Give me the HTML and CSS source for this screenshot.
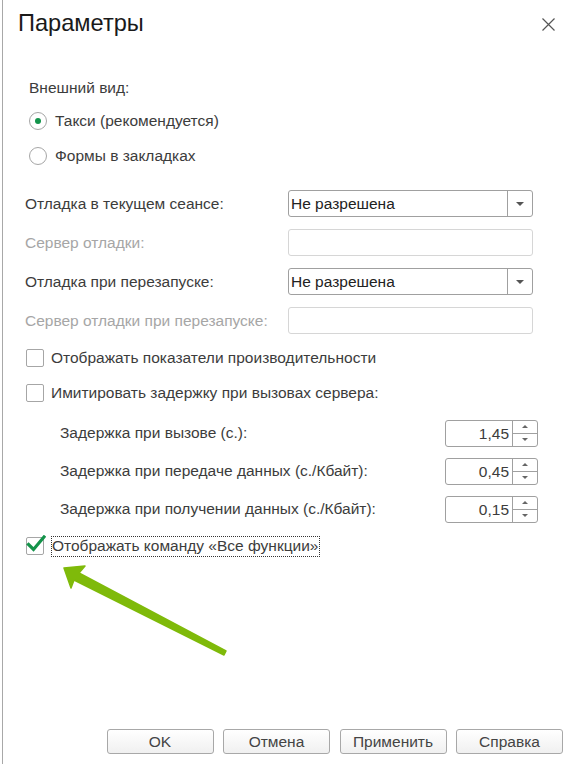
FILE: index.html
```html
<!DOCTYPE html>
<html lang="ru">
<head>
    <meta charset="UTF-8">
    <meta name="viewport" content="width=device-width, initial-scale=1.0">
    <title>Параметры</title>
    <link rel="stylesheet" href="styles.css">
</head>
<body>
    <div class="dialog">
        <div class="titlebar">
            <h1>Параметры</h1>
            <span class="close">
                <svg width="13" height="13" viewBox="0 0 13 13"><path d="M0.5 0.5 L12.5 12.5 M12.5 0.5 L0.5 12.5" stroke="#555" stroke-width="1.2" fill="none"/></svg>
            </span>
        </div>

        <div class="content">
            <!-- Appearance -->
            <div class="appearance">
                <div class="group-title">Внешний вид:</div>
                <div class="radio-row"><span class="radio checked"></span>Такси (рекомендуется)</div>
                <div class="radio-row"><span class="radio"></span>Формы в закладках</div>
            </div>

            <!-- Debug settings -->
            <div class="fields">
                <div class="field-label">Отладка в текущем сеансе:</div>
                <div class="select">
                    <span class="select-value">Не разрешена</span>
                    <span class="select-btn"><i class="tri-down"></i></span>
                </div>
                <div class="field-label disabled">Сервер отладки:</div>
                <div class="input disabled"></div>
                <div class="field-label">Отладка при перезапуске:</div>
                <div class="select">
                    <span class="select-value">Не разрешена</span>
                    <span class="select-btn"><i class="tri-down"></i></span>
                </div>
                <div class="field-label disabled">Сервер отладки при перезапуске:</div>
                <div class="input disabled"></div>
            </div>

            <div class="check-row"><span class="check"></span>Отображать показатели производительности</div>
            <div class="check-row"><span class="check"></span>Имитировать задержку при вызовах сервера:</div>

            <div class="delays">
                <div class="delay-label">Задержка при вызове (с.):</div>
                <div class="spin">
                    <span class="spin-value">1,45</span>
                    <span class="spin-btns"><span><i class="tri-up"></i></span><span><i class="tri-down small"></i></span></span>
                </div>
                <div class="delay-label">Задержка при передаче данных (с./Кбайт):</div>
                <div class="spin">
                    <span class="spin-value">0,45</span>
                    <span class="spin-btns"><span><i class="tri-up"></i></span><span><i class="tri-down small"></i></span></span>
                </div>
                <div class="delay-label">Задержка при получении данных (с./Кбайт):</div>
                <div class="spin">
                    <span class="spin-value">0,15</span>
                    <span class="spin-btns"><span><i class="tri-up"></i></span><span><i class="tri-down small"></i></span></span>
                </div>
            </div>

            <div class="check-row last">
                <span class="check checked">
                    <svg width="20" height="18" viewBox="0 0 20 18"><path d="M2.5 9.5 L7.5 14.5 L18 2" stroke="#14934a" stroke-width="3.2" fill="none" stroke-linecap="square"/></svg>
                </span>
                <span class="focus">Отображать команду «Все функции»</span>
            </div>
        </div>

        <div class="buttons">
            <span class="btn">OK</span>
            <span class="btn">Отмена</span>
            <span class="btn">Применить</span>
            <span class="btn">Справка</span>
        </div>

        <!-- annotation arrow over the form -->
        <svg class="pointer" width="570" height="764" viewBox="0 0 570 764">
            <polygon points="64,568 85,566 79,573 226,651 224,655 74,580 71,588" fill="#7fba0a" stroke="#7fba0a" stroke-width="1.5" stroke-linejoin="round"/>
        </svg>
    </div>
</body>
</html>
```

FILE: styles.css
```css
body {
    margin: 0;
    padding: 0;
    background-color: #fff;
    font-family: 'Liberation Sans', Arial, sans-serif;
    font-size: 15.5px;
    color: #3c3c3c;
}
.dialog {
    position: relative;
    box-sizing: border-box;
    width: 568px;
    height: 764px;
    margin-left: 2px;
    border-left: 1px solid #a8a8a8;
    display: flex;
    flex-direction: column;
}
.titlebar {
    height: 46px;
    display: flex;
    align-items: center;
    justify-content: space-between;
    padding: 0 15px 0 15px;
}
.titlebar h1 {
    margin: 0;
    font-size: 23.6px;
    font-weight: normal;
    color: #1a1a1a;
}
.close {
    display: flex;
    margin-top: 2px;
}
.content {
    padding-left: 22px;
}
.appearance {
    margin-top: 27px;
    padding-left: 4px;
}
.group-title {
    height: 30px;
    line-height: 30px;
}
.radio-row {
    height: 35px;
    display: flex;
    align-items: center;
    gap: 8px;
}
.radio {
    box-sizing: border-box;
    width: 18px;
    height: 18px;
    border: 1px solid #a6a6a6;
    border-radius: 50%;
    display: flex;
    align-items: center;
    justify-content: center;
}
.radio.checked::after {
    content: "";
    width: 6px;
    height: 6px;
    border-radius: 50%;
    background-color: #13944b;
}
.fields {
    display: grid;
    grid-template-columns: 263px 245px;
    grid-auto-rows: 39px;
    align-items: center;
    margin-top: 11px;
}
.field-label.disabled {
    color: #a6a6a6;
}
.select {
    box-sizing: border-box;
    height: 27px;
    border: 1px solid #a0a0a0;
    border-radius: 3px;
    display: flex;
    align-items: center;
}
.select-value {
    flex: 1;
    padding-left: 2px;
    color: #222;
}
.select-btn {
    width: 24px;
    height: 100%;
    border-left: 1px solid #a0a0a0;
    display: flex;
    align-items: center;
    justify-content: center;
}
.input {
    box-sizing: border-box;
    height: 27px;
    border: 1px solid #d6d6d6;
    border-radius: 3px;
}
.tri-down {
    width: 0;
    height: 0;
    border-left: 4px solid transparent;
    border-right: 4px solid transparent;
    border-top: 4px solid #555;
}
.tri-down.small {
    border-left-width: 3px;
    border-right-width: 3px;
    border-top-width: 3px;
    border-top-color: #666;
}
.tri-up {
    width: 0;
    height: 0;
    border-left: 3px solid transparent;
    border-right: 3px solid transparent;
    border-bottom: 3px solid #666;
}
.check-row {
    height: 35px;
    display: flex;
    align-items: center;
    gap: 7px;
    padding-left: 1px;
}
.check {
    position: relative;
    box-sizing: border-box;
    width: 18px;
    height: 18px;
    border: 1px solid #a6a6a6;
    border-radius: 2px;
}
.check.checked svg {
    position: absolute;
    left: -1px;
    top: -3px;
}
.check-row.last {
    height: 36px;
}
.focus {
    border: 1px dotted #333;
    padding: 0 1px 1px 0;
    line-height: 18px;
}
.delays {
    display: grid;
    grid-template-columns: 385px 93px;
    grid-auto-rows: 38px;
    align-items: center;
    padding-left: 35px;
    margin-top: 4px;
}
.spin {
    box-sizing: border-box;
    height: 27px;
    border: 1px solid #a0a0a0;
    border-radius: 3px;
    display: flex;
}
.spin-value {
    flex: 1;
    text-align: right;
    padding-right: 3px;
    line-height: 25px;
}
.spin-btns {
    width: 24px;
    border-left: 1px solid #a0a0a0;
    display: flex;
    flex-direction: column;
}
.spin-btns span {
    flex: 1;
    display: flex;
    align-items: center;
    justify-content: center;
}
.spin-btns span + span {
    border-top: 1px solid #a0a0a0;
}
.buttons {
    margin-top: auto;
    display: flex;
    justify-content: flex-end;
    gap: 9.5px;
    padding: 0 7px 10px 0;
}
.btn {
    box-sizing: border-box;
    width: 107px;
    height: 25px;
    border: 1px solid #a8a8a8;
    border-radius: 3px;
    background: linear-gradient(#ffffff, #f0f0f0);
    display: flex;
    align-items: center;
    justify-content: center;
    color: #444;
}
.pointer {
    position: absolute;
    left: -3px;
    top: 0;
    pointer-events: none;
}
```
